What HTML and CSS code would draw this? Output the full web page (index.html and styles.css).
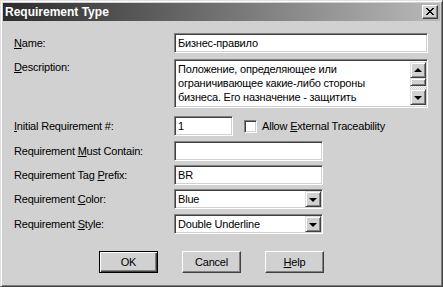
FILE: index.html
```html
<!DOCTYPE html>
<html lang="en">
<head>
  <meta charset="UTF-8">
  <title>Requirement Type</title>
  <link rel="stylesheet" href="styles.css">
</head>
<body>
  <div class="window">
    <div class="titlebar">
      <span class="title">Requirement Type</span>
      <div class="close">
        <svg width="8" height="7" viewBox="0 0 8 7">
          <path d="M0 0h2v1h-2zM6 0h2v1h-2zM1 1h2v1h-2zM5 1h2v1h-2zM2 2h4v1h-4zM3 3h2v1h-2zM2 4h4v1h-4zM1 5h2v1h-2zM5 5h2v1h-2zM0 6h2v1h-2zM6 6h2v1h-2z" fill="#000"/>
        </svg>
      </div>
    </div>

    <div class="content">
      <div class="form">
        <div class="label"><u>N</u>ame:</div>
        <div class="field wide">Бизнес-правило</div>

        <div class="label top"><u>D</u>escription:</div>
        <div class="field wide memo">
          <div class="memo-text">Положение, определяющее или<br>ограничивающее какие-либо стороны<br>бизнеса. Его назначение - защитить</div>
          <div class="scrollbar">
            <div class="sb-btn"><span class="arrow up"></span></div>
            <div class="sb-thumb"></div>
            <div class="sb-track"></div>
            <div class="sb-btn"><span class="arrow down"></span></div>
          </div>
        </div>

        <div class="label"><u>I</u>nitial Requirement #:</div>
        <div class="inline">
          <div class="field short">1</div>
          <div class="checkbox"></div>
          <span class="check-label">Allow <u>E</u>xternal Traceability</span>
        </div>

        <div class="label">Requirement <u>M</u>ust Contain:</div>
        <div class="field medium"></div>

        <div class="label">Requirement Tag <u>P</u>refix:</div>
        <div class="field medium">BR</div>

        <div class="label">Requirement <u>C</u>olor:</div>
        <div class="field medium select">
          <span class="select-value">Blue</span>
          <div class="sb-btn drop"><span class="arrow down"></span></div>
        </div>

        <div class="label">Requirement <u>S</u>tyle:</div>
        <div class="field medium select">
          <span class="select-value">Double Underline</span>
          <div class="sb-btn drop"><span class="arrow down"></span></div>
        </div>
      </div>

      <div class="buttons">
        <div class="btn default"><span>OK</span></div>
        <div class="btn"><span>Cancel</span></div>
        <div class="btn"><span><u>H</u>elp</span></div>
      </div>
    </div>
  </div>
</body>
</html>
```

FILE: styles.css
```css
body {
  margin: 0;
  font-family: "Liberation Sans", Arial, sans-serif;
  font-size: 11px;
  letter-spacing: -0.2px;
  color: #000;
}
.window {
  width: 443px;
  height: 287px;
  box-sizing: border-box;
  background: #d1d1d1;
  border: 1px solid;
  border-color: #e0e0e0 #404040 #404040 #e0e0e0;
  box-shadow: inset 1px 1px #fff, inset -1px -1px #808080;
  padding: 2px;
}
.titlebar {
  height: 18px;
  display: flex;
  align-items: center;
  justify-content: space-between;
  padding: 0 2px;
  background: linear-gradient(to right, #2c2c2c, #b9b9b9);
}
.title {
  color: #fff;
  font-weight: bold;
  font-size: 12px;
  letter-spacing: 0;
}
.close {
  width: 16px;
  height: 14px;
  box-sizing: border-box;
  background: #d1d1d1;
  border: 1px solid;
  border-color: #fff #404040 #404040 #fff;
  box-shadow: inset -1px -1px #808080;
  display: flex;
  align-items: center;
  justify-content: center;
  padding: 0 1px 1px 0;
}
.close svg {
  display: block;
}
.content {
  padding: 12px 0 0 11px;
}
.form {
  display: grid;
  grid-template-columns: 160px auto;
  grid-template-rows: 26px 57px 25px 24px 24px 25px 20px;
  align-items: start;
}
.label {
  height: 20px;
  line-height: 20px;
  white-space: nowrap;
}
.label.top {
  line-height: 14px;
  padding-top: 1px;
}
.field {
  box-sizing: border-box;
  height: 20px;
  background: #fff;
  border: 1px solid;
  border-color: #808080 #fff #fff #808080;
  box-shadow: inset 1px 1px #404040, inset -1px -1px #d1d1d1;
  padding: 0 3px;
  line-height: 18px;
  white-space: nowrap;
}
.wide {
  width: 254px;
}
.medium {
  width: 149px;
}
.short {
  width: 59px;
}
.memo {
  height: 49px;
  display: flex;
  padding: 2px 1px 2px 3px;
  line-height: 14px;
}
.memo-text {
  flex: 1;
  overflow: hidden;
}
.scrollbar {
  width: 16px;
  display: flex;
  flex-direction: column;
}
.sb-btn {
  width: 16px;
  height: 16px;
  box-sizing: border-box;
  background: #d1d1d1;
  border: 1px solid;
  border-color: #e0e0e0 #404040 #404040 #e0e0e0;
  box-shadow: inset 1px 1px #fff, inset -1px -1px #808080;
  display: flex;
  align-items: center;
  justify-content: center;
}
.sb-thumb {
  height: 8px;
  box-sizing: border-box;
  background: #d1d1d1;
  border: 1px solid;
  border-color: #e0e0e0 #404040 #404040 #e0e0e0;
  box-shadow: inset 1px 1px #fff, inset -1px -1px #808080;
}
.sb-track {
  flex: 1;
  background: repeating-conic-gradient(#fff 0 25%, #d1d1d1 0 50%) 0 0 / 2px 2px;
}
.arrow {
  width: 0;
  height: 0;
  border-left: 4px solid transparent;
  border-right: 4px solid transparent;
}
.arrow.up {
  border-bottom: 4px solid #000;
}
.arrow.down {
  border-top: 4px solid #000;
  margin-top: 1px;
}
.inline {
  display: flex;
  align-items: center;
}
.checkbox {
  width: 13px;
  height: 13px;
  box-sizing: border-box;
  margin-left: 11px;
  background: #fff;
  border: 1px solid;
  border-color: #808080 #fff #fff #808080;
  box-shadow: inset 1px 1px #404040, inset -1px -1px #d1d1d1;
}
.check-label {
  margin-left: 5px;
}
.select {
  display: flex;
  justify-content: space-between;
  padding: 1px 1px 1px 3px;
  line-height: 16px;
}
.buttons {
  display: flex;
  gap: 24px;
  margin-top: 17px;
  padding-left: 85px;
}
.btn {
  width: 59px;
  height: 22px;
  box-sizing: border-box;
  background: #d1d1d1;
  border: 1px solid;
  border-color: #fff #404040 #404040 #fff;
  box-shadow: inset -1px -1px #808080;
  display: flex;
  align-items: center;
  justify-content: center;
}
.btn.default {
  border-color: #000;
  box-shadow: inset 1px 1px #fff, inset -1px -1px #404040, inset -2px -2px #808080;
}
```
